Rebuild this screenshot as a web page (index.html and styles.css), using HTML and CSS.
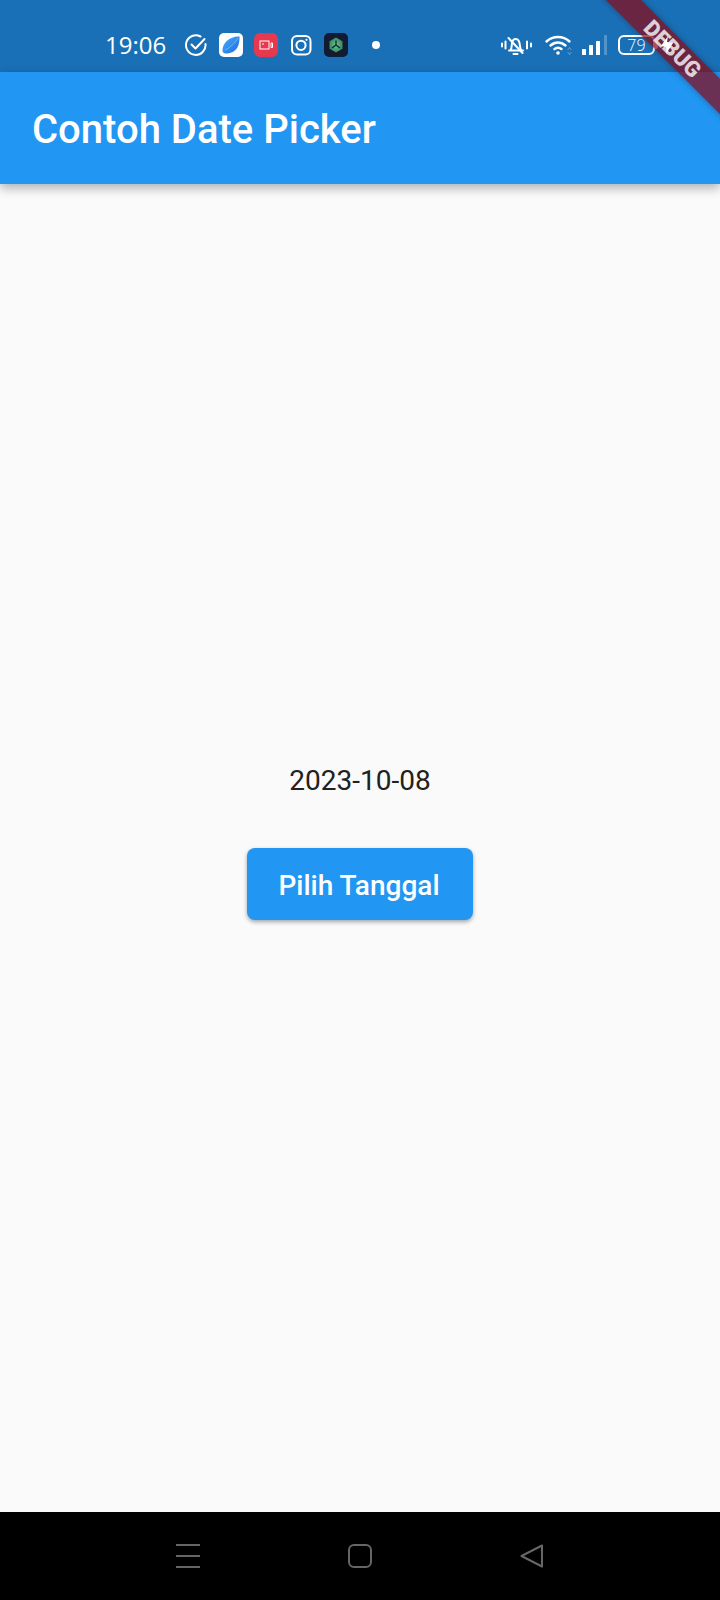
FILE: index.html
```html
<!DOCTYPE html>
<html lang="id">
<head>
<meta charset="utf-8">
<title>Contoh Date Picker</title>
<link rel="stylesheet" href="styles.css">
</head>
<body>
<div class="phone">
  <div class="status">
    <span class="time">19:06</span>
    <div class="notifs">
      <svg width="24" height="24" viewBox="0 0 24 24" fill="none" stroke="#fff" stroke-width="2" stroke-linecap="round" stroke-linejoin="round"><path d="M21.500 11A9.800 9.800 0 1 1 16.500 3.500"/><path d="M7.500 11.500l4 4 9-9.500"/></svg>
      <svg width="24" height="24" viewBox="0 0 24 24"><defs><linearGradient id="leaf" x1="0" y1="0" x2="1" y2="1"><stop offset="0" stop-color="#45b0f7"/><stop offset="1" stop-color="#1f68e6"/></linearGradient></defs><rect width="24" height="24" rx="5" fill="#fff"/><path d="M20.500 3.500c.5 9-3 16-12 17-2 .2-4.800-.2-5-2.500C3 10 11 3 20.500 3.500z" fill="url(#leaf)"/><path d="M6 17C10 15 15 11 19 5" fill="none" stroke="#8fd4fb" stroke-width="1" opacity=".6"/></svg>
      <svg width="24" height="24" viewBox="0 0 24 24"><rect width="24" height="24" rx="6" fill="#e63950"/><rect x="6" y="8" width="9" height="8" fill="none" stroke="#fff" stroke-width="1"/><path d="M17 10v4.500h1.500V10z" fill="none" stroke="#fff" stroke-width="1"/><path d="M8 11h2" stroke="#fff" stroke-width="1"/></svg>
      <svg width="24" height="24" viewBox="0 0 24 24" fill="none" stroke="#fff" stroke-width="2"><rect x="3" y="3" width="18.500" height="18.500" rx="5"/><circle cx="12" cy="12.300" r="4.600"/><circle cx="17.500" cy="6.800" r="1.100" fill="#fff" stroke="none"/></svg>
      <svg width="24" height="24" viewBox="0 0 24 24"><defs><radialGradient id="hex"><stop offset="0" stop-color="#6cc58a"/><stop offset="1" stop-color="#3b8a63"/></radialGradient></defs><rect width="24" height="24" rx="5" fill="#111c33"/><path d="M12 4.500l6.500 3.700v7.600L12 19.500l-6.500-3.700V8.200z" fill="url(#hex)"/><path d="M12 7.500V12l4 3M12 12l-4 3" fill="none" stroke="#12233a" stroke-width="1.300"/></svg>
      <span class="dot"></span>
    </div>
    <div class="sys">
      <svg width="32" height="24" viewBox="0 0 32 24" fill="none" stroke="#fff" stroke-width="2" stroke-linecap="round" stroke-linejoin="round"><path d="M1 10.500v3M4.500 8.500v7M26 8.500v7M30 10.500v3"/><path d="M8 17.500h14M9.500 17c1.500-2 1-4 1.500-7 .5-2.500 2-4 3.500-4s3.500 1.500 4 4c.5 3 .5 5 1.500 7"/><path d="M7.500 5l14 15M12.500 21h4"/></svg>
      <svg class="wifi" width="26" height="22" viewBox="0 0 26 22" fill="none" stroke="#fff" stroke-width="2.400" stroke-linecap="round"><path d="M1.500 7.500C8 1.500 18 1.500 24.500 7.500"/><path d="M5.500 11.500c4.500-4 10.500-4 15 0"/><path d="M9.500 15c2-1.500 5-1.500 7 0"/><circle cx="13" cy="19" r="1.800" fill="#fff" stroke="none"/><path d="M23 15.500l1.500-2 1.500 2M23 18.500l1.500 2 1.500-2" stroke-width="1" opacity=".35"/></svg>
      <svg class="signal" width="26" height="20" viewBox="0 0 26 20"><rect x="0" y="14" width="4" height="6" rx=".5" fill="#fff"/><rect x="7" y="10" width="4" height="10" rx=".5" fill="#fff"/><rect x="14" y="6" width="4" height="14" rx=".5" fill="#fff"/><rect x="22" y="0" width="3" height="20" rx=".5" fill="#fff" opacity=".25"/></svg>
      <div class="batt"><span class="batt-num">79</span></div>
      <svg class="bolt" width="14" height="18" viewBox="0 0 14 18"><path d="M8 0L7 6 13 7 6 18 6.500 11 1 10z" fill="#fff"/></svg>
    </div>
  </div>
  <header class="appbar"><h1 class="title">Contoh Date Picker</h1></header>
  <main class="content">
    <p class="date">2023-10-08</p>
    <button class="pick" type="button">Pilih Tanggal</button>
  </main>
  <nav class="navbar">
    <svg width="24" height="24" viewBox="0 0 24 24" stroke="#666" stroke-width="2"><path d="M0 1h24M0 12h24M0 23h24"/></svg>
    <svg width="24" height="24" viewBox="0 0 24 24" fill="none" stroke="#666" stroke-width="2"><rect x="1" y="1" width="22" height="22" rx="5"/></svg>
    <svg width="24" height="24" viewBox="0 0 24 24" fill="none" stroke="#666" stroke-width="2" stroke-linejoin="round"><path d="M22 1.500L1.500 12 22 22.500z"/></svg>
  </nav>
  <div class="banner"><span class="banner-text">DEBUG</span></div>
</div>
</body>
</html>
```
FILE: styles.css
```css
* { box-sizing: border-box; }
html, body { margin: 0; padding: 0; }
body { background: #fafafa; font-family: Roboto, "Liberation Sans", sans-serif; }
.phone { position: relative; width: 720px; height: 1600px; overflow: hidden; display: flex; flex-direction: column; background: #fafafa; }

.status { height: 72px; background: #1a70b6; display: flex; align-items: center; padding: 18px 0 0 105px; color: #fff; flex: none; }
.time { font-family: "Open Sans", sans-serif; font-size: 24px; line-height: 28px; width: 79px; font-weight: 400; }
.notifs { display: flex; align-items: center; gap: 11px; width: 317px; }
.dot { width: 8px; height: 8px; border-radius: 50%; background: #fff; margin-left: 13px; }
.sys { display: flex; align-items: center; gap: 12px; }
.wifi { overflow: visible; }
.signal { margin-left: -1px; }
.batt { position: relative; width: 37px; height: 20px; margin-left: -2px; border: 2px solid #fff; border-radius: 6px; display: flex; align-items: center; justify-content: center; }
.batt::after { content: ""; position: absolute; right: -5px; top: 4px; width: 3px; height: 8px; background: #fff; border-radius: 0 2px 2px 0; }
.batt-num { font-family: "Open Sans", sans-serif; font-size: 16px; line-height: 16px; color: #fff; font-weight: 300; }
.bolt { margin-left: -7px; position: relative; z-index: 3; }

.appbar { height: 112px; background: #2196f3; display: flex; align-items: center; padding: 4px 0 0 32px; flex: none; position: relative; z-index: 1; box-shadow: 0 4px 10px rgba(0,0,0,.3); }
.title { margin: 0; font-size: 40px; line-height: 48px; font-weight: 500; color: #fff; }

.content { flex: 1; display: flex; flex-direction: column; align-items: center; justify-content: center; padding-bottom: 12px; }
.date { margin: 0 0 51px; font-size: 28px; line-height: 33px; color: #212121; }
.pick { width: 226px; height: 72px; border: 0; border-radius: 8px; background: #2196f3; color: #fff; font-family: inherit; font-size: 28px; font-weight: 500; padding: 2px 2px 0 0; box-shadow: 0 2px 4px rgba(0,0,0,.35); }

.navbar { height: 88px; background: #000; display: flex; align-items: center; justify-content: center; gap: 148px; flex: none; }

.banner { position: absolute; z-index: 2; left: 521px; top: 35px; width: 300px; height: 25px; padding-left: 4px; transform: rotate(45deg); background: rgba(140,5,15,.7); box-shadow: 0 0 6px rgba(0,0,0,.3); display: flex; align-items: center; justify-content: center; }
.banner-text { font-size: 22px; font-weight: 900; line-height: 25px; color: rgba(255,255,255,.78); }
```
